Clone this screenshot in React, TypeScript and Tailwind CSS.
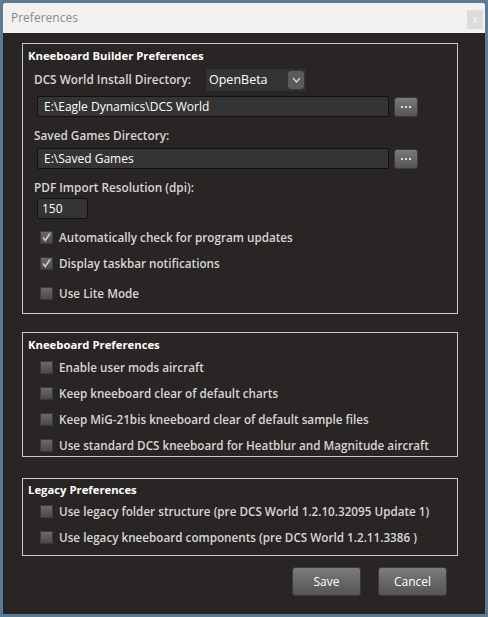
import React from "react";

const font = { fontFamily: '"Open Sans", "Noto Sans", sans-serif' };

function Check({ checked, label }: { checked?: boolean; label: string }) {
  return (
    <div className="flex h-[16px] items-center gap-[6px] pl-[12px]">
      <span className="flex h-[13px] w-[13px] items-center justify-center border border-[#3a3a3a] bg-gradient-to-b from-[#6a6a6a] to-[#4a4a4a]">
        {checked && (
          <svg width="11" height="11" viewBox="0 0 11 11">
            <path d="M2 5.5 L4.3 8.5 L9 1.5" fill="none" stroke="#cfcfcf" strokeWidth="1.6" />
          </svg>
        )}
      </span>
      <span className="whitespace-nowrap text-[11.7px] font-semibold leading-[16px] text-[#d6d6d6]">{label}</span>
    </div>
  );
}

function Group({ title, className, children }: { title: string; className?: string; children: React.ReactNode }) {
  return (
    <div className={"border border-[#c8c8c8] px-[5px] " + (className ?? "")}>
      <div className="text-[11.3px] font-bold leading-[16px] text-white">{title}</div>
      {children}
    </div>
  );
}

function PathBox({ value }: { value: string }) {
  return (
    <div className="flex items-center gap-[5px] pl-[9px]">
      <div className="flex h-[21px] w-[352px] items-center rounded-[2px] border border-[#111] bg-[#343434] px-[6px] text-[12px] text-white">
        {value}
      </div>
      <div className="flex h-[20px] w-[24px] flex-col items-center justify-center rounded-[3px] border border-[#3c3c3c] bg-gradient-to-b from-[#7a7a7a] to-[#555]">
        <span className="flex gap-[2px]">
          <span className="h-[2px] w-[2px] bg-[#dde]" />
          <span className="h-[2px] w-[2px] bg-[#dde]" />
          <span className="h-[2px] w-[2px] bg-[#dde]" />
        </span>
      </div>
    </div>
  );
}

export default function App() {
  return (
    <div className="h-[617px] w-[488px] bg-[#5b7b95] p-[3px]" style={font}>
      <div className="flex h-[611px] flex-col overflow-hidden rounded-t-[2px] bg-[#292524]">
        <div className="flex h-[30px] items-center justify-between bg-[#f1f1f1] pl-[8px] pr-[2px]">
          <span className="text-[12px] text-[#8a8a8a]">Preferences</span>
          <span className="mt-[2px] flex h-[19px] w-[16px] items-center justify-center bg-[#dcdcdc] text-[10px] text-[#f4f4f4]">x</span>
        </div>
        <div className="flex flex-col pl-[19px] pr-[27px] pt-[10px]">
          <Group title="Kneeboard Builder Preferences" className="h-[271px] pt-[4px]">
            <div className="mt-[5px] flex h-[22px] items-center pl-[6px]">
              <span className="w-[172px] whitespace-nowrap text-[11.8px] font-semibold text-[#d6d6d6]">DCS World Install Directory:</span>
              <div className="flex h-[22px] w-[100px] items-center justify-between rounded-[3px] bg-[#333] pl-[3px] pr-[2px]">
                <span className="text-[12.5px] text-white">OpenBeta</span>
                <span className="flex h-[18px] w-[16px] items-center justify-center rounded-[3px] bg-[#5a5a5a]">
                  <svg width="9" height="6" viewBox="0 0 9 6">
                    <path d="M1 1 L4.5 5 L8 1" fill="none" stroke="#cfcfcf" strokeWidth="1.4" />
                  </svg>
                </span>
              </div>
            </div>
            <div className="mt-[5px]">
              <PathBox value="E:\Eagle Dynamics\DCS World" />
            </div>
            <div className="mt-[10px] pl-[6px] text-[11.8px] font-semibold leading-[16px] text-[#d6d6d6]">Saved Games Directory:</div>
            <div className="mt-[5px]">
              <PathBox value="E:\Saved Games" />
            </div>
            <div className="mt-[10px] pl-[6px] text-[11.8px] font-semibold leading-[16px] text-[#d6d6d6]">PDF Import Resolution (dpi):</div>
            <div className="mt-[3px] pl-[9px]">
              <div className="flex h-[21px] w-[51px] items-center rounded-[2px] border border-[#111] bg-[#343434] px-[4px] text-[12px] text-white">150</div>
            </div>
            <div className="mt-[10px] flex flex-col gap-[10px]">
              <Check checked label="Automatically check for program updates" />
              <Check checked label="Display taskbar notifications" />
            </div>
            <div className="mt-[14px]">
              <Check label="Use Lite Mode" />
            </div>
          </Group>
          <Group title="Kneeboard Preferences" className="mt-[18px] h-[125px] pt-[4px]">
            <div className="mt-[6px] flex flex-col gap-[10px]">
              <Check label="Enable user mods aircraft" />
              <Check label="Keep kneeboard clear of default charts" />
              <Check label="Keep MiG-21bis kneeboard clear of default sample files" />
              <Check label="Use standard DCS kneeboard for Heatblur and Magnitude aircraft" />
            </div>
          </Group>
          <Group title="Legacy Preferences" className="mt-[21px] h-[78px] pt-[3px]">
            <div className="mt-[5px] flex flex-col gap-[10px]">
              <Check label="Use legacy folder structure (pre DCS World 1.2.10.32095 Update 1)" />
              <Check label="Use legacy kneeboard components (pre DCS World 1.2.11.3386 )" />
            </div>
          </Group>
          <div className="mt-[11px] flex justify-end gap-[17px] pr-[11px]">
            <button className="h-[29px] w-[69px] rounded-[3px] border border-[#3a3a3a] bg-gradient-to-b from-[#7c7c7c] via-[#676767] to-[#555] text-[12px] text-white">Save</button>
            <button className="h-[29px] w-[69px] rounded-[3px] border border-[#3a3a3a] bg-gradient-to-b from-[#7c7c7c] via-[#676767] to-[#555] text-[12px] text-white">Cancel</button>
          </div>
        </div>
      </div>
    </div>
  );
}
